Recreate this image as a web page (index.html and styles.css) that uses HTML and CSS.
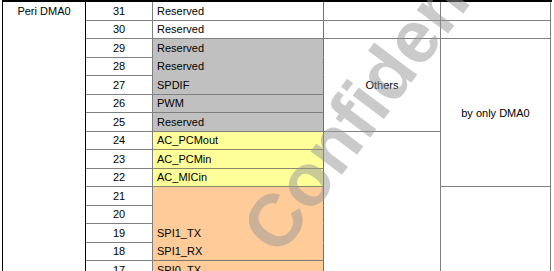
FILE: index.html
```html
<!DOCTYPE html>
<html>
<head>
<meta charset="utf-8">
<link rel="stylesheet" href="styles.css">
</head>
<body>
<div class="page">
  <div class="table">
    <div class="c1">Peri DMA0</div>

    <div class="num r1">31</div>
    <div class="num r2">30</div>
    <div class="num r3">29</div>
    <div class="num r4">28</div>
    <div class="num r5">27</div>
    <div class="num r6">26</div>
    <div class="num r7">25</div>
    <div class="num r8">24</div>
    <div class="num r9">23</div>
    <div class="num r10">22</div>
    <div class="num r11">21</div>
    <div class="num r12">20</div>
    <div class="num r13">19</div>
    <div class="num r14">18</div>
    <div class="num r15">17</div>

    <div class="name r1">Reserved</div>
    <div class="name r2">Reserved</div>
    <div class="name r3 gray open">Reserved</div>
    <div class="name r4 gray open">Reserved</div>
    <div class="name r5 gray">SPDIF</div>
    <div class="name r6 gray">PWM</div>
    <div class="name r7 gray">Reserved</div>
    <div class="name r8 yellow">AC_PCMout</div>
    <div class="name r9 yellow">AC_PCMin</div>
    <div class="name r10 yellow">AC_MICin</div>
    <div class="name r11 orange open"></div>
    <div class="name r12 orange open"></div>
    <div class="name r13 orange open">SPI1_TX</div>
    <div class="name r14 orange">SPI1_RX</div>
    <div class="name r15 orange">SPI0_TX</div>

    <div class="c4 r1"></div>
    <div class="c4 r2"></div>
    <div class="c4 others">Others</div>
    <div class="c4 rest4"></div>

    <div class="c5 r1"></div>
    <div class="c5 r2"></div>
    <div class="c5 dma">by only DMA0</div>
    <div class="c5 rest5"></div>
  </div>
  <div class="watermark">Confidential</div>
</div>
</body>
</html>
```

FILE: styles.css
```css
html, body {
  margin: 0;
  padding: 0;
  background: #fff;
  overflow: hidden;
}
body {
  width: 554px;
  height: 271px;
  font-family: "Liberation Sans", Arial, sans-serif;
  font-size: 11px;
  color: #000;
}
.page {
  position: relative;
  width: 554px;
  height: 271px;
  overflow: hidden;
}
.table {
  margin-left: 2px;
  margin-top: 0;
  width: 550px;
  border-top: 2px solid #000;
  display: grid;
  grid-template-columns: 84px 67px 171px 117px 110px;
  grid-template-rows: repeat(15, 18.5px);
}
.table > div {
  box-sizing: border-box;
  display: flex;
  align-items: center;
  border-right: 1px solid #808080;
  border-bottom: 1px solid #808080;
  white-space: nowrap;
}
.table > .c1 {
  grid-column: 1;
  grid-row: 1 / 16;
  border-left: 1px solid #000;
  border-right: 1px solid #000;
  border-bottom: none;
  align-items: flex-start;
  justify-content: center;
  line-height: 18px;
}
.num { grid-column: 2; justify-content: center; }
.name { grid-column: 3; padding-left: 4px; }
.c4 { grid-column: 4; justify-content: center; }
.c5 { grid-column: 5; justify-content: center; }

.r1 { grid-row: 1; }
.r2 { grid-row: 2; }
.r3 { grid-row: 3; }
.r4 { grid-row: 4; }
.r5 { grid-row: 5; }
.r6 { grid-row: 6; }
.r7 { grid-row: 7; }
.r8 { grid-row: 8; }
.r9 { grid-row: 9; }
.r10 { grid-row: 10; }
.r11 { grid-row: 11; }
.r12 { grid-row: 12; }
.r13 { grid-row: 13; }
.r14 { grid-row: 14; }
.r15 { grid-row: 15; }

.table > .name { border-right-color: #707070; }
.gray { background: #c0c0c0; }
.yellow { background: #ffff99; }
.table > .yellow { border-bottom-color: #8a8a6a; }
.orange { background: #ffcc99; }
.table > .orange { border-bottom-color: #8a7a6a; }
.table > .open { border-bottom-color: transparent; }
.table > .gray.open { border-bottom-color: #c0c0c0; }
.table > .orange.open { border-bottom-color: #ffcc99; }

.others { grid-row: 3 / 8; }
.rest4 { grid-row: 8 / 16; }
.table > .rest4 { border-bottom: none; }
.dma { grid-row: 3 / 11; }
.rest5 { grid-row: 11 / 16; }
.table > .rest5 { border-bottom: none; }

.watermark {
  position: absolute;
  left: 388px;
  top: 72px;
  transform: translate(-50%, -50%) rotate(-53deg);
  font-family: "Liberation Sans", Arial, sans-serif;
  font-weight: bold;
  font-size: 74px;
  line-height: 1;
  color: rgba(150, 150, 150, 0.5);
  white-space: nowrap;
  pointer-events: none;
}
```
